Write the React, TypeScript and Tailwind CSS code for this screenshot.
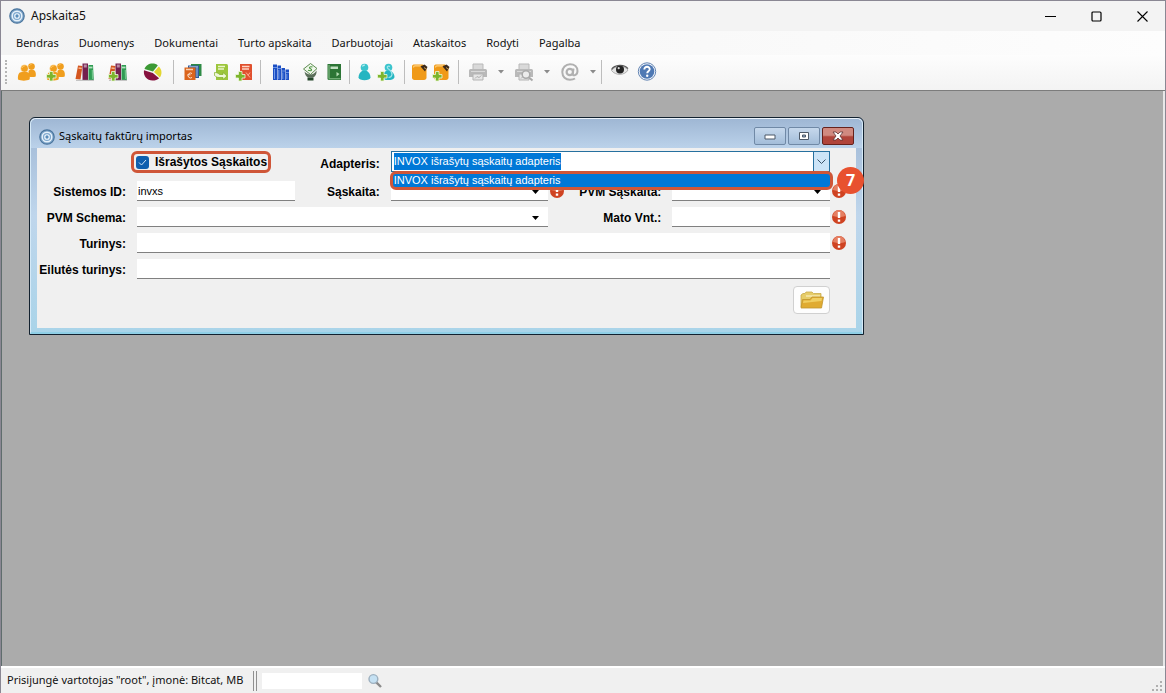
import React, { useEffect, useRef } from "react";

const MENU = ["Bendras", "Duomenys", "Dokumentai", "Turto apskaita", "Darbuotojai", "Ataskaitos", "Rodyti", "Pagalba"];

const ADAPTER = "INVOX išrašytų sąskaitų adapteris";

type IconProps = { children: React.ReactNode; className?: string };

const Icon: React.FC<IconProps> = ({ children, className = "w-5 h-5" }) => (
  <svg viewBox="0 0 20 20" className={`${className} shrink-0 overflow-visible`} fill="none" aria-hidden="true">
    {children}
  </svg>
);

/* Small green plus drawn over the lower left corner of "new" icons */
const Plus = () => (
  <path d="M3.500 9.500h3.500v3h3v3.500H7v3H3.500v-3h-3v-3.500h3z" fill="#7db52c" stroke="#eef7dc" strokeWidth="0.8" />
);

const People = () => (
  <g fill="#f09e1e">
    <circle cx="14.500" cy="4.500" r="3.300" />
    <path d="M11.500 9c1-1.500 4-2 6-.5 1.500 1.500 1.500 3.500 1.200 6-2 .8-5 .8-7 0z" />
    <circle cx="7.500" cy="6.500" r="3.800" stroke="#fff3dc" strokeWidth="0.500" />
    <path d="M1 17.500c-.4-4 .5-7.500 4-7.500h4.500c3.500 0 3.800 4 3 7.500-3 1.500-8.500 1.500-11.500 0z" />
    <path d="M5 6a3 3 0 0 1 3-2.200M12.500 3.500a2.500 2.500 0 0 1 2-1" stroke="#ffc862" strokeWidth="1" />
  </g>
);

const Books = () => (
  <>
    <path d="M3 3.500l4.500.500L5.500 17.500.5 17z" fill="#d4561f" />
    <path d="M3.500 6l3.300.500" stroke="#f5b48d" strokeWidth="1.600" />
    <path d="M7.500 1.500H13V18H7.500z" fill="#74204e" />
    <path d="M8.800 2.500h3v3h-3z" fill="#b98aa4" />
    <path d="M13.500 3H18l.8 15h-5.300z" fill="#2f9c53" />
    <path d="M14 5.500h3.500" stroke="#b4e2bf" strokeWidth="1.800" />
    <path d="M17.300 8l.3 9" stroke="#6fc489" strokeWidth="1.200" />
    <path d="M1 18.300h18" stroke="#a8a8a8" strokeWidth="0.8" />
  </>
);

const Pie = () => (
  <>
    <path d="M11 9.500L2.500 7C3.500 3.500 7 1.500 10.500 1.500c2.200 0 4 .6 5.300 1.900z" fill="#3c9a35" />
    <path d="M12 10l4.800-5.600c3.200 2.800 3.500 7.600 1 11.100z" fill="#e2d631" />
    <path d="M10.800 10.900L2 8.300C1 14 5 18.500 10.500 18.500c2.700 0 5-.9 6.600-2.300z" fill="#87123f" />
  </>
);

const Ledgers = () => (
  <>
    <path d="M8 2h10.500v12H8z" fill="#2e8b45" />
    <path d="M5 3.500h11V16H5z" fill="#2d5b9c" />
    <path d="M6 4.800h9M14 5v10" stroke="#a6c3e8" />
    <path d="M1.500 5.500h11V18h-11z" fill="#db641c" />
    <path d="M3 7.500h7" stroke="#fbd0ad" strokeWidth="1.500" />
    <path d="M9 11.500a2.500 2.500 0 1 0 0 4M4.500 12.800h3" stroke="#fbe0cc" />
  </>
);

const GreenSheet = () => (
  <>
    <path d="M5 2h10.500a1.500 1.500 0 0 1 1.500 1.500V18H5z" fill="#9cc63c" />
    <path d="M7 4.500h7M7 7h6" stroke="#eaf5cc" strokeWidth="1.300" />
    <path d="M3.500 10.500c3 0 4 1 5 2H12v-2l4 3.500-4 3.500v-2H8c-2 0-3-.8-4.500-2z" fill="#eff8d8" stroke="#80ad28" strokeWidth="0.700" />
  </>
);

const RedSheet = () => (
  <>
    <path d="M5 2h11a1 1 0 0 1 1 1v15H5z" fill="#e0502e" />
    <path d="M7 4.500h7.500M7 7h7" stroke="#ffd6c6" strokeWidth="1.300" />
    <path d="M11 10.500l4 5M15 10.500l-2 3" stroke="#ffab90" />
    <Plus />
  </>
);

const BlueBooks = () => (
  <>
    <path d="M2 2.500h4V18H2zM6.500 3.500H10V18H6.500zM10.500 6H14v12h-3.500zM14.500 7.500H18V18h-3.500z" fill="#1c4fc4" />
    <path d="M3.500 7v10M7.800 8V17M11.800 10.500V17M15.800 12V17" stroke="#6f9aea" strokeWidth="1" />
    <path d="M2 5.500h4M6.500 6.500H10M10.500 9H14M14.500 10.500H18" stroke="#7ea4ee" strokeWidth="0.800" />
  </>
);

const MoneyHand = () => (
  <>
    <path d="M10.500 1.500l6.500 5-6.500 6-7-5.500z" fill="#eff7ea" stroke="#5c8b50" />
    <path d="M12.500 5c-3-1-4 1-2 1.800s1 2.800-2.500 1.500" stroke="#4b9640" strokeWidth="1.100" />
    <path d="M4.500 9.500c1 1 3.500 3 6 3s4.500-1.500 6-4c.5 3-1 6-3.500 7H8c-2-1-3-3-3.500-6z" fill="#5b6f5a" />
    <path d="M7.500 15.500h6v3h-6z" fill="#24472a" />
  </>
);

const GreenBook = () => (
  <>
    <path d="M3.500 2H17v16H5a1.500 1.500 0 0 1-1.500-1.500z" fill="#2c7535" />
    <path d="M6.500 4.500H14v2.500H6.500z" fill="#c2e0c2" />
    <path d="M4.500 16.800h12M5 3v13" stroke="#8dc491" />
    <path d="M12.500 10l3 2-3 2.500z" fill="#b8dfb6" />
  </>
);

const Person = () => (
  <>
    <circle cx="9.500" cy="5.500" r="3.800" fill="#3bc4cd" />
    <path d="M3.500 15.500c0-3.500 2-5.500 3.500-6.500h5c1.500 1 3.500 3 3.500 6.500-.5 3.500-11.500 3.500-12 0z" fill="#25b5c1" />
    <path d="M7.500 4.500a2 2 0 0 1 2.500-1.300" stroke="#baf1f2" strokeWidth="1.200" />
  </>
);

const PersonPlus = () => (
  <>
    <circle cx="11.500" cy="5.500" r="3.800" fill="#3bc4cd" />
    <path d="M6 14.500c0-3 1.500-4.500 3-5.500h5c1.500 1 3.500 3 3.500 6-.5 3.500-8 3.500-10 2.500z" fill="#25b5c1" />
    <path d="M13 4.500c-2-1-3.500.2-2.200 1.800 1.500 1.700 4.700 3 4.200 6.200-.3 2-1.700 3-3.500 3" stroke="#a3e7ea" strokeWidth="1.200" />
    <Plus />
  </>
);

const Note = () => (
  <>
    <path d="M2 4.500C2 3 3 2.500 4.500 2.500H13l3.500 4v9c0 1.500-1 2.500-2.500 2.500H4.500C3 18 2 17 2 15.500z" fill="#f09a18" />
    <path d="M3.500 5.500c0-1 .5-1.600 1.500-1.600h6" stroke="#ffd07c" strokeWidth="1.200" />
    <path d="M10.500 4.500l4-2 3 2.500-2.500 4.500z" fill="#3b291b" />
    <path d="M14 5.500l2 1.500" stroke="#c79f55" />
  </>
);

const Printer = () => (
  <>
    <path d="M5 2h10v6H5z" fill="#d9d9d9" stroke="#b9b9b9" />
    <path d="M2.500 7h15A1.500 1.500 0 0 1 19 8.500V15H1V8.500A1.500 1.500 0 0 1 2.500 7z" fill="#b9b9b9" />
    <path d="M3 9.500h14" stroke="#d9d9d9" />
    <path d="M5 12h10v6H5z" fill="#e6e6e6" stroke="#b3b3b3" />
    <path d="M7 16.500l2-2 2 1 2.500-2" stroke="#b0b0b0" />
  </>
);

const Preview = () => (
  <>
    <Printer />
    <circle cx="12" cy="12.500" r="3.800" fill="#ececec" stroke="#a9a9a9" strokeWidth="1.500" />
    <path d="M15 15.500l3.500 3" stroke="#a9a9a9" strokeWidth="2" />
  </>
);

const At = () => (
  <>
    <circle cx="9.800" cy="10" r="3.200" stroke="#b0b0b0" strokeWidth="2.200" />
    <path d="M13.500 6.500l-.8 5.500c-.2 2.500 4.800 1.500 4.800-3 0-4-3-6.800-7.500-6.800A7.700 7.700 0 0 0 2.300 10c0 4.800 3.400 7.800 7.700 7.800 2 0 3.800-.5 5-1.300" stroke="#b0b0b0" strokeWidth="2" />
  </>
);

const Eye = () => (
  <>
    <path d="M1.500 8.500c3-5 12.500-6 16.500-.5-3 5.500-12.500 6-16.500.5z" fill="#e4e4e4" stroke="#a1a1a1" strokeWidth="0.800" />
    <circle cx="10" cy="7.500" r="4" fill="#232323" />
    <circle cx="8.700" cy="6.200" r="1.100" fill="#dadada" />
    <path d="M1.500 7.500c3-4.800 12.500-5.800 16.500-.8" stroke="#555" strokeWidth="1.200" />
  </>
);

const Help = () => (
  <>
    <circle cx="9" cy="9.500" r="8.700" fill="#f3f6fb" stroke="#6485b3" strokeWidth="1" />
    <circle cx="9" cy="9.500" r="7.300" fill="#4f79b4" />
    <path d="M6.300 7.500c0-3.800 5.600-3.400 5.400-.3-.1 2-2.500 2.100-2.500 4.100" stroke="#fff" strokeWidth="1.900" />
    <circle cx="9.200" cy="13.700" r="1.200" fill="#fff" />
  </>
);

const Rings: React.FC<{ className?: string }> = ({ className }) => (
  <Icon className={className}>
    <circle cx="10" cy="10" r="9" fill="#7ba3c8" stroke="#4a759d" strokeWidth="1.500" />
    <circle cx="10" cy="10" r="6" fill="#7fa9cf" stroke="#e6f1fa" strokeWidth="1.800" />
    <circle cx="10" cy="10" r="2.800" fill="#5a8dbb" stroke="#eef6fc" strokeWidth="1.500" />
  </Icon>
);

const ErrorIcon = () => (
  <svg viewBox="0 0 16 16" className="w-4 h-4 ml-px self-center" role="img" aria-label="Klaida">
    <circle cx="8" cy="8" r="7" fill="#cf4322" />
    <path d="M2 7a6 6 0 0 1 12 0c-3 1.500-8 1.500-12 0z" fill="#e57f62" />
    <path d="M6.800 3h2.400v6H6.800zM6.800 10.500h2.400v2.300H6.800z" fill="#fff" />
  </svg>
);

interface ToolProps {
  label: string;
  width: string;
  disabled?: boolean;
  children: React.ReactNode;
}

const Tool: React.FC<ToolProps> = ({ label, width, disabled, children }) => (
  <button aria-label={label} disabled={disabled} className={`${width} h-7 flex items-center justify-center`}>
    <Icon>{children}</Icon>
  </button>
);

const ToolArrow: React.FC<{ label: string }> = ({ label }) => (
  <button aria-label={label} disabled className="w-3 h-7 flex items-center justify-center">
    <svg viewBox="0 0 6 4" className="w-[6px] h-1"><path d="M0 0h6L3 3.500z" fill="#8b8b8b" /></svg>
  </button>
);

const Sep: React.FC<{ margin?: string }> = ({ margin = "mx-[5px]" }) => (
  <div className={`w-px h-6 bg-[#bdbdbd] ${margin}`} />
);

const labelClass = "pr-[11px] pt-[2px] self-center text-right font-bold text-xs leading-4 whitespace-nowrap";
const fieldClass = "w-full h-5 bg-white border-b border-[#808080] px-px outline-none rounded-none";

const DropDown: React.FC<{ id: string }> = ({ id }) => (
  <div className="relative">
    <select id={id} className={`${fieldClass} appearance-none`} defaultValue="">
      <option value=""></option>
    </select>
    <svg viewBox="0 0 7 4" className="absolute right-[9px] top-[9px] w-[7px] h-1 pointer-events-none">
      <path d="M0 0h7L3.500 4z" fill="#000" />
    </svg>
  </div>
);

const AdapterCombo = () => {
  const input = useRef<HTMLInputElement>(null);

  useEffect(() => {
    input.current?.focus();
    input.current?.select();
  }, []);

  return (
    <div className="relative col-span-4">
      <div className="flex h-[21px] bg-white border border-[#26709f]">
        <input
          id="adapter"
          ref={input}
          role="combobox"
          aria-expanded="true"
          aria-controls="adapter-list"
          defaultValue={ADAPTER}
          className="flex-1 min-w-0 px-[2px] outline-none selection:bg-[#0078d7] selection:text-white"
        />
        <button aria-label="Atidaryti" className="w-4 bg-[#cce4f7] border-l border-[#26709f] flex items-center justify-center">
          <svg viewBox="0 0 9 6" className="w-[9px] h-[6px]" fill="none"><path d="M.5.500l4 4 4-4" stroke="#3a5268" /></svg>
        </button>
      </div>
      <ul
        id="adapter-list"
        role="listbox"
        className="absolute z-10 top-[20px] -left-px -right-[3px] h-[19px] bg-[#0078d7] border-3 border-[#cf5638] rounded-md text-white"
      >
        <li role="option" aria-selected="true" className="px-px leading-[13px] whitespace-nowrap">{ADAPTER}</li>
      </ul>
      {/* Step marker */}
      <span
        className="absolute z-20 top-4 -right-[34px] w-[27px] h-[27px] rounded-full bg-[#e8512f] text-white text-base leading-[27px] font-bold text-center font-['Noto_Sans',sans-serif]"
      >
        7
      </span>
    </div>
  );
};

const ImportWindow = () => (
  <section className="w-full max-w-[835px] border border-[#12212f] rounded-t-md bg-linear-to-b from-[#9fb7d4] via-[#bfd6ec] via-45% to-[#a9d4e9]">
    <div className="border border-b-2 border-t-[#eaf2fa] border-x-[#d6eaf7] border-b-[#8fcfe6] rounded-t-md px-[6px] pb-1">

      {/* Title bar */}
      <header className="h-[29px] -mx-[6px] px-[6px] rounded-t-md flex items-center bg-linear-to-b from-[#9fb7d4] to-[#bbd2ea]">
        <Rings className="w-4 h-4 ml-[2px] mt-[6px]" />
        <h1 className="ml-1 mt-[6px] flex-1 text-[11px] text-black">Sąskaitų faktūrų importas</h1>
        <div className="flex gap-[2px] mt-1 mr-[2px]">
          <button aria-label="Sumažinti" className="w-8 h-[18px] border border-[#7089a6] rounded-xs bg-linear-to-b from-[#c6d8ec] to-[#a3bdd9] flex items-center justify-center">
            <svg viewBox="0 0 12 6" className="w-3 h-[6px] mt-[3px]"><path d="M1 1h10v4H1z" fill="#fff" stroke="#4d5968" /></svg>
          </button>
          <button aria-label="Padidinti" className="w-8 h-[18px] border border-[#7089a6] rounded-xs bg-linear-to-b from-[#c6d8ec] to-[#a3bdd9] flex items-center justify-center">
            <svg viewBox="0 0 12 10" className="w-3 h-[10px]"><path d="M1.500 1.500h9v7h-9z" fill="#fff" stroke="#4d5968" /><path d="M4.500 4h3v2h-3z" fill="#93acc9" stroke="#4d5968" /></svg>
          </button>
          <button aria-label="Uždaryti" className="w-8 h-[18px] border border-[#66221c] rounded-xs bg-linear-to-b from-[#d08a80] from-45% to-[#b0443a] to-55% flex items-center justify-center">
            <svg viewBox="0 0 12 10" className="w-3 h-[10px]"><path d="M1 1h3l2 2 2-2h3L8 5l3 4H8L6 7 4 9H1l3-4z" fill="#fff" stroke="#5c3434" strokeWidth="0.8" /></svg>
          </button>
        </div>
      </header>

      <form
        onSubmit={(e) => e.preventDefault()}
        className="bg-[#f0f0f0] pt-[3px] pb-[14px] text-[11px] font-['Liberation_Sans',Arial,sans-serif] text-black"
      >
        <div className="grid grid-cols-[100px_1fr_96px_1fr_18px_106px_1fr_26px] grid-rows-[24px_repeat(4,20px)] gap-y-[6px]">
          <div className="col-span-2">
            <label className="ml-[94px] h-[22px] pr-px border-3 border-[#cf5638] rounded-md inline-flex items-center font-bold text-xs whitespace-nowrap">
              <input type="checkbox" defaultChecked className="peer sr-only" />
              <span className="ml-[2px] mr-[6px] w-[13px] h-[13px] rounded-[3px] bg-[#0f5fae] flex items-center justify-center">
                <svg viewBox="0 0 9 7" className="w-[9px] h-[7px]" fill="none"><path d="M1 3.500l2.500 2.500L8 1" stroke="#cfe3f6" /></svg>
              </span>
              Išrašytos Sąskaitos
            </label>
          </div>
          <label htmlFor="adapter" className={labelClass}>Adapteris:</label>
          <AdapterCombo />
          <span />

          <label htmlFor="system" className={labelClass}>Sistemos ID:</label>
          <input id="system" defaultValue="invxs" className={fieldClass} />
          <label htmlFor="account" className={labelClass}>Sąskaita:</label>
          <DropDown id="account" />
          <ErrorIcon />
          <label htmlFor="vat-account" className={labelClass}>PVM Sąskaita:</label>
          <DropDown id="vat-account" />
          <ErrorIcon />

          <label htmlFor="vat-schema" className={labelClass}>PVM Schema:</label>
          <div className="col-span-3"><DropDown id="vat-schema" /></div>
          <label htmlFor="unit" className={`${labelClass} col-span-2`}>Mato Vnt.:</label>
          <input id="unit" className={fieldClass} />
          <ErrorIcon />

          <label htmlFor="content" className={labelClass}>Turinys:</label>
          <input id="content" className={`${fieldClass} col-span-6`} />
          <ErrorIcon />

          <label htmlFor="row-content" className={labelClass}>Eilutės turinys:</label>
          <input id="row-content" className={`${fieldClass} col-span-6`} />
        </div>

        <div className="flex justify-end mt-[7px] pr-[26px]">
          <button aria-label="Atidaryti failą" className="w-[37px] h-7 bg-[#fdfdfd] border border-[#d0d0d0] rounded-sm flex items-center justify-center">
            <svg viewBox="0 0 24 18" className="w-6 h-[18px]">
              <path d="M1 16V4l2-1.500h2L6 1h6l1.500 1.500H21V9z" fill="#e6cc68" stroke="#c9a94a" strokeWidth="0.800" />
              <path d="M6 5h14" stroke="#f6e9b0" strokeWidth="1.500" />
              <path d="M1 17l1.500-8.500H10L12 6h11.500L21.500 17z" fill="#e0ab31" stroke="#c0942e" strokeWidth="0.800" />
              <path d="M3.500 9.500h7l2-2.500H22L21.500 10 3 12z" fill="#f0cf62" />
            </svg>
          </button>
        </div>
      </form>
    </div>
  </section>
);

export default function App() {
  return (
    <div className="min-h-screen flex flex-col bg-[#f3f3f3] border-t border-x border-[#8a8793] text-[11px] text-[#111] font-['Noto_Sans',sans-serif]">

      {/* Title bar */}
      <header className="h-[30px] flex items-center pl-2">
        <Rings className="w-4 h-4" />
        <span className="ml-[6px] flex-1 text-xs">Apskaita5</span>
        <button aria-label="Sumažinti" className="w-[46px] h-full flex items-center justify-center">
          <svg viewBox="0 0 11 11" className="w-[11px] h-[11px]"><path d="M0 5.500h11" stroke="#000" /></svg>
        </button>
        <button aria-label="Padidinti" className="w-[46px] h-full flex items-center justify-center">
          <svg viewBox="0 0 11 11" className="w-[11px] h-[11px]"><rect x="1" y="1" width="9" height="9" rx="1" fill="none" stroke="#000" strokeWidth="1.200" /></svg>
        </button>
        <button aria-label="Uždaryti" className="w-[46px] h-full flex items-center justify-center">
          <svg viewBox="0 0 11 11" className="w-[11px] h-[11px]"><path d="M.5.500l10 10M10.500.500l-10 10" stroke="#000" strokeWidth="1.100" /></svg>
        </button>
      </header>

      {/* Menu */}
      <nav className="h-6 flex items-center gap-5 pl-[15px] bg-linear-to-r from-[#f3f3f3] to-[#fdfdfd]">
        {MENU.map((item) => (
          <button key={item}>{item}</button>
        ))}
      </nav>

      {/* Toolbar */}
      <div role="toolbar" className="h-9 flex items-center pb-px pl-1 border-b border-[#7c7c7c] bg-linear-to-b from-[#fdfdfd] to-[#f3f3f3]">
        <div className="w-[7px] h-6 border-l-2 border-dotted border-[#b5b5b5]" />
        <Tool label="Asmenys" width="w-[30px]"><People /></Tool>
        <Tool label="Naujas asmuo" width="w-7"><People /><Plus /></Tool>
        <Tool label="Sąskaitų planas" width="w-[30px]"><Books /></Tool>
        <Tool label="Nauja operacija" width="w-9"><Books /><Plus /></Tool>
        <Tool label="Balansas" width="w-8"><Pie /></Tool>
        <Sep />
        <Tool label="Registrai" width="w-7"><Ledgers /></Tool>
        <Tool label="Gauta sąskaita" width="w-7"><GreenSheet /></Tool>
        <Tool label="Nauja sąskaita" width="w-5"><RedSheet /></Tool>
        <Sep />
        <Tool label="Bankas" width="w-[30px]"><BlueBooks /></Tool>
        <Tool label="Avansas" width="w-7"><MoneyHand /></Tool>
        <Tool label="Kasos knyga" width="w-5"><GreenBook /></Tool>
        <Sep />
        <Tool label="Darbuotojai" width="w-5"><Person /></Tool>
        <Tool label="Naujas darbuotojas" width="w-6"><PersonPlus /></Tool>
        <Sep />
        <Tool label="Pastabos" width="w-5"><Note /></Tool>
        <Tool label="Nauja pastaba" width="w-6"><Note /><Plus /></Tool>
        <Sep margin="ml-1 mr-[2px]" />
        <Tool label="Spausdinti" width="w-[34px]" disabled><Printer /></Tool>
        <ToolArrow label="Spausdinimo parinktys" />
        <Tool label="Peržiūra" width="w-[34px]" disabled><Preview /></Tool>
        <ToolArrow label="Peržiūros parinktys" />
        <Tool label="Siųsti" width="w-[34px]" disabled><At /></Tool>
        <ToolArrow label="Siuntimo parinktys" />
        <Sep margin="mx-[2px]" />
        <Tool label="Rodyti" width="w-8"><Eye /></Tool>
        <Tool label="Pagalba" width="w-6"><Help /></Tool>
      </div>

      <main className="flex-1 bg-[#ababab] border-l border-r-2 border-l-[#5f6d6d] border-r-[#e8e8e8] pt-[26px] pl-[27px]">
        <ImportWindow />
      </main>

      {/* Status bar */}
      <footer className="h-[27px] flex items-center pl-[6px] bg-[#f0f0f0] border-t-2 border-white">
        <span className="whitespace-nowrap">Prisijungė vartotojas "root", įmonė: Bitcat, MB</span>
        <div className="ml-[10px] w-1 h-5 border-x border-[#8f8f8f]" />
        <input aria-label="Paieška" className="ml-[5px] w-[100px] h-4 bg-white outline-none" />
        <button aria-label="Ieškoti" className="ml-[5px]">
          <Icon className="w-4 h-4">
            <path d="M11 11l6.500 6.500" stroke="#8b8b8b" strokeWidth="3" />
            <circle cx="8" cy="7.500" r="5.500" fill="#c5e1f3" stroke="#9db0bf" strokeWidth="1.800" />
          </Icon>
        </button>
        <svg viewBox="0 0 12 12" className="ml-auto mr-px w-3 h-3 self-end">
          <path d="M8 0h2v2H8zM4 4h2v2H4zM8 4h2v2H8zM0 8h2v2H0zM4 8h2v2H4zM8 8h2v2H8z" fill="#b0b0b0" />
        </svg>
      </footer>
    </div>
  );
}
